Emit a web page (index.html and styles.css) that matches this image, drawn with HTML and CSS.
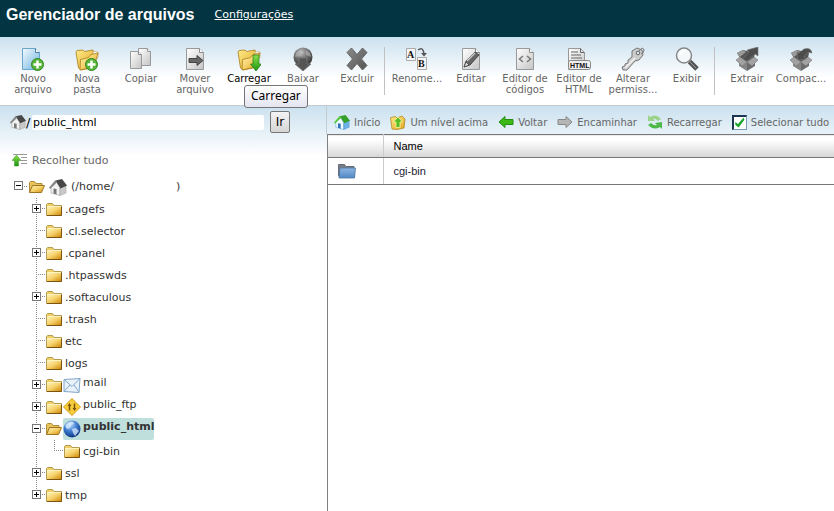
FILE: index.html
```html
<!DOCTYPE html>
<html lang="pt-BR">
<head>
<meta charset="utf-8">
<title>Gerenciador de arquivos</title>
<link rel="stylesheet" href="styles.css">
</head>
<body>
<svg class="sprite" aria-hidden="true">
  <defs>
    <linearGradient id="gold" x1="0" y1="0" x2="1" y2="1"><stop offset="0" stop-color="#fff3b8"/><stop offset=".5" stop-color="#f5d069"/><stop offset="1" stop-color="#d08a08"/></linearGradient>
    <linearGradient id="yellow" x1="0" y1="0" x2="1" y2="1"><stop offset="0" stop-color="#ffe98a"/><stop offset="1" stop-color="#e0a820"/></linearGradient>
    <linearGradient id="bluePage" x1="0" y1="0" x2="1" y2="1"><stop offset="0" stop-color="#f4fbff"/><stop offset="1" stop-color="#6fb3df"/></linearGradient>
    <linearGradient id="greyPage" x1="0" y1="0" x2="1" y2="1"><stop offset="0" stop-color="#fff"/><stop offset="1" stop-color="#c4c4c4"/></linearGradient>
    <linearGradient id="green" x1="0" y1="0" x2="0" y2="1"><stop offset="0" stop-color="#8be04a"/><stop offset="1" stop-color="#1c9410"/></linearGradient>
    <linearGradient id="steel" x1="0" y1="0" x2="1" y2="1"><stop offset="0" stop-color="#8a8a8a"/><stop offset="1" stop-color="#555"/></linearGradient>
    <linearGradient id="folderBlue" x1="0" y1="0" x2="0" y2="1"><stop offset="0" stop-color="#8db6e2"/><stop offset="1" stop-color="#5288c4"/></linearGradient>
    <radialGradient id="ball" cx=".4" cy=".25" r=".8"><stop offset="0" stop-color="#bbb"/><stop offset=".5" stop-color="#6a6a6a"/><stop offset="1" stop-color="#2e2e2e"/></radialGradient>
    <radialGradient id="earth" cx=".4" cy=".25" r=".8"><stop offset="0" stop-color="#b8dcff"/><stop offset=".5" stop-color="#3a78cc"/><stop offset="1" stop-color="#0a2c78"/></radialGradient>

    <symbol id="plus" viewBox="0 0 24 24"><circle cx="16.500" cy="17.500" r="6" fill="#59b53a" stroke="#2f861c"/><path d="M16.500 13.500v8M12.500 17.500h8" stroke="#fff" stroke-width="2.400"/></symbol>
    <symbol id="page" viewBox="0 0 24 24"><path d="M3.500 1.500h13l4 4v17h-17z" fill="url(#greyPage)" stroke="#999"/><path d="M16.500 1.500v4h4" fill="#fff" stroke="#888"/></symbol>
    <symbol id="open24" viewBox="0 0 24 24"><path d="M3.500 21L1 5l1-1.500 6-.5 1.500 1.500L18 3l1 4 1 13-14 3z" fill="url(#yellow)" stroke="#a87d16" stroke-width=".8"/><path d="M18 4.500l5 .5v6l-4 3z" fill="#fff" stroke="#b89b50" stroke-width=".6"/><path d="M5 23l.5-10.500 8-2 2.500-3 7-1.500-4 14z" fill="url(#gold)" stroke="#a87d16" stroke-width=".8"/></symbol>
    <symbol id="new-file" viewBox="0 0 24 24"><path d="M1.500 1.500h13l4 4v17h-17z" fill="url(#bluePage)" stroke="#6aa6cc"/><path d="M14.500 1.500v4h4" fill="#fff" stroke="#477fa8"/><use href="#plus"/></symbol>
    <symbol id="new-folder" viewBox="0 0 24 24"><use href="#open24"/><use href="#plus"/></symbol>
    <symbol id="copy" viewBox="0 0 24 24"><path d="M9.500 1.500h9l3 3v14h-12z" fill="url(#greyPage)" stroke="#999"/><path d="M18.500 1.500v3h3" fill="#fff" stroke="#999"/><path d="M1.500 4.500h8l3 3v14h-11z" fill="url(#greyPage)" stroke="#999"/><path d="M9.500 4.500v3h3" fill="#fff" stroke="#888"/></symbol>
    <symbol id="move" viewBox="0 0 24 24"><use href="#page"/><path d="M6 11.500h8v-3l6 5-6 5v-3H6z" fill="#666" stroke="#444"/></symbol>
    <symbol id="upload" viewBox="0 0 24 24"><use href="#open24"/><path d="M16 8h6v9h2.500L19 24l-5.500-7H16z" fill="url(#green)" stroke="#27801b" stroke-width=".7"/></symbol>
    <symbol id="download" viewBox="0 0 24 24"><circle cx="12" cy="10" r="9.500" fill="url(#ball)"/><path d="M5 6l4-3 4 2-3 4-6 1zM15 3l4 3 1 4-5-2z" fill="#bbb" opacity=".55"/><path d="M8 11h8v6h4l-8 7-8-7h4z" fill="#555" stroke="#777" stroke-width=".8"/></symbol>
    <symbol id="delete" viewBox="0 0 24 24"><path d="M2 5.500L6.500 1 12 7.500 17.500 1 22 5.500 16.500 12l5.500 6.500-4.500 4.500-5.500-6.500L6.500 23 2 18.500 7.500 12z" fill="url(#steel)" stroke="#666"/></symbol>
    <symbol id="rename" viewBox="0 0 24 24"><path d="M1.500 1.500h9v12h-9zM12.500 10.500h9v12h-9z" fill="#f5f5f5" stroke="#aaa"/><text x="2" y="11" class="glyph-serif">A</text><text x="13" y="20" class="glyph-serif">B</text><path d="M13 3q5-4 6 4" fill="none" stroke="#555" stroke-width="1.500"/><path d="M16 6h6l-3 3.500z" fill="#555"/></symbol>
    <symbol id="edit" viewBox="0 0 24 24"><use href="#page"/><path d="M5 20l2-6L16 5l4 3-9 10z" fill="#666" stroke="#333" stroke-width=".8"/><path d="M8 14l8-8" stroke="#ccc" stroke-width="1.500"/><path d="M5 20l2-5 3 3z" fill="#ddd" stroke="#333" stroke-width=".6"/></symbol>
    <symbol id="code" viewBox="0 0 24 24"><use href="#page"/><path d="M10 9l-3.500 3 3.500 3M14 9l3.500 3-3.500 3" fill="none" stroke="#777" stroke-width="1.500"/></symbol>
    <symbol id="html" viewBox="0 0 24 24"><path d="M1.500 1.500h12l4 4v17h-16z" fill="url(#greyPage)" stroke="#999"/><path d="M13.500 1.500v4h4M4 5h7M4 8h10M4 11h11" fill="none" stroke="#666"/><rect x="1.500" y="13.500" width="22" height="9" rx="2" fill="#eee" stroke="#888"/><text x="3" y="21" class="glyph-sans">HTML</text></symbol>
    <symbol id="key" viewBox="0 0 24 24"><path d="M11 4l5-3 5 2 1 5-4 5-4 1-8 9H2l-1-3 3-1v-2l3-1v-3l4-3z" fill="#ccc" stroke="#777"/><path d="M4 21l10-10" stroke="#f5f5f5" stroke-width="1.500"/><circle cx="17" cy="6" r="1.800" fill="#dcebf3" stroke="#666"/><path d="M18 4q4-5 5-1 0 3-3 4" fill="none" stroke="#777"/></symbol>
    <symbol id="view" viewBox="0 0 24 24"><path d="M14.500 14.500L22 22" stroke="#555" stroke-width="5"/><path d="M13 13l8 8" stroke="#999"/><circle cx="9" cy="8.500" r="7.500" fill="#f5f8fa" stroke="#888" stroke-width="1.500"/><path d="M5 8q1-4 5-4" fill="none" stroke="#fff" stroke-width="2"/></symbol>
    <symbol id="box" viewBox="0 0 24 24"><path d="M2 6l6-3 12 3-1 5-7 4-7-4z" fill="#555"/><path d="M2 6l6-3 3 2-6 5z" fill="#999"/><path d="M4 11l8 4v9l-8-5z" fill="#858585"/><path d="M20 11l-8 4v9l8-5z" fill="#6c6c6c"/><path d="M1 13l4-3 7 5-5 4zM23 13l-4-3-7 5 5 4z" fill="#a2a2a2" stroke="#777" stroke-width=".6"/></symbol>
    <symbol id="extract" viewBox="0 0 24 24"><use href="#box"/><path d="M8 12l6-7-2-2L23 0v9l-3-2-8 7z" fill="#4d4d4d" stroke="#777" stroke-width=".6"/></symbol>
    <symbol id="compress" viewBox="0 0 24 24"><use href="#box"/><path d="M23 6q-1-6-8-4l-5 4-2-1 1 8 8-1-2-2q3-6 8-4z" fill="#4d4d4d" stroke="#777" stroke-width=".6"/></symbol>

    <symbol id="home-grey" viewBox="0 0 18 18"><path d="M2 9l5-6 4 7v7.500L2 15z" fill="#f2f2f2" stroke="#aaa" stroke-width=".7"/><path d="M11 10l6-3v8l-6 2.500z" fill="#c9c9c9" stroke="#999" stroke-width=".5"/><path d="M6.500 2.500L13 1l5 6.500-6.500 3z" fill="#484848"/><path d="M0 9.500l6.500-7.500L8 4.500 1 11z" fill="#888"/><path d="M4.500 10.500l3 .5v5.500l-3-1z" fill="#777"/></symbol>
    <symbol id="home-color" viewBox="0 0 18 18"><path d="M2 9l5-6 4 7v7.500L2 15z" fill="#f0faff" stroke="#78b4e0" stroke-width=".7"/><path d="M11 10l6-3v8l-6 2.500z" fill="#6cb2ea" stroke="#3d86c5" stroke-width=".5"/><path d="M6.500 2.500L13 1l5 6.500-6.500 3z" fill="#35a02a"/><path d="M0 9.500l6.500-7.500L8 4.500 1 11z" fill="#58c840"/><path d="M4.500 10.500l3 .5v5.500l-3-1z" fill="#2970b8"/></symbol>
    <symbol id="folder" viewBox="0 0 16 16"><path d="M.5 14.500v-11l1-1h5l1.500 2h7.500v10z" fill="#f1cf67" stroke="#b59a52"/><path d="M1 6h14v8H1z" fill="url(#gold)"/><path d="M1 5.500h14" stroke="#fff3bd"/><path d="M1 14.500h14.500v-9" fill="none" stroke="#7b5510"/></symbol>
    <symbol id="folder-open" viewBox="0 0 16 16"><path d="M.5 13.500V3.500l1-1h4l1.500 2h6v3" fill="#e9c25a" stroke="#b08c38"/><path d="M.5 13.500l3-7h12l-3 7z" fill="url(#gold)" stroke="#9b7624"/></symbol>
    <symbol id="folder-blue" viewBox="0 0 18 16"><path d="M.5 13V1.500h6l1.500 2h8V14z" fill="#777d87" stroke="#666d78"/><path d="M2 5h15.500l-1 10H1z" fill="url(#folderBlue)" stroke="#4d76a5" stroke-width=".8"/></symbol>
    <symbol id="mail" viewBox="0 0 18 18"><path d="M1 3.500l16-1-1 14-15-1z" fill="#e9f2fa" stroke="#83a6c8"/><path d="M1 3.500l8 7 8-8M1 15.500l6-6.500M16 16l-5-7" fill="none" stroke="#83a6c8"/></symbol>
    <symbol id="ftp" viewBox="0 0 18 18"><path d="M9 .5L17.500 9 9 17.500.5 9z" fill="#f7cd3c" stroke="#d09b11"/><path d="M6.500 12.500V7M11.500 5.500V11" stroke="#7a5500" stroke-width="1.500"/><path d="M4.500 8l2-3 2 3zM9.500 10l2 3 2-3z" fill="#7a5500"/></symbol>
    <symbol id="globe" viewBox="0 0 18 18"><circle cx="9" cy="9" r="8.500" fill="url(#earth)"/><path d="M2 6q3-5 8-4l1 2-3 1-1 3-3 1zM9 9l4-1 3 3-4 5-2-3z" fill="#dbeeff" opacity=".75"/></symbol>
    <symbol id="collapse" viewBox="0 0 16 14"><path d="M7 1.500h8M9 4.500h6M9 7.500h6M9 10.500h6M1 1.500h6" stroke="#999"/><path d="M4.500 2L9 7.500H6.500V13h-4V7.500H0z" fill="url(#green)" stroke="#3a912b" stroke-width=".5"/></symbol>
    <symbol id="up" viewBox="0 0 16 16"><path d="M2 15L.5 3.500l5-1L7 4l5-2 3 3-1 9-7 1.500z" fill="url(#yellow)" stroke="#b38a22" stroke-width=".8"/><path d="M8 3l4.500 5H10v5.500H6V8H3.500z" fill="#55bd23" stroke="#fff7a0" stroke-width=".8"/></symbol>
    <symbol id="arrow" viewBox="0 0 16 14"><path d="M1 7l6-5.500v3h8v5H7v3z" fill="currentColor" stroke-width="1"/></symbol>
    <symbol id="reload" viewBox="0 0 16 16"><path d="M1 7V1l2 2q6-4 11 2l-3 2Q8 4 6 5l2 2z" fill="#9bd38b"/><path d="M15 8v7l-2-2q-6 4-12-2l3-2q3 3 6 2L8 9z" fill="#4cb84a"/></symbol>
  </defs>
</svg>

<header class="masthead">
  <h1>Gerenciador de arquivos</h1>
  <a href="#">Configurações</a>
</header>

<nav class="toolbar" aria-label="Ações">
  <button class="tool"><svg><use href="#new-file"/></svg><span>Novo<br>arquivo</span></button>
  <button class="tool"><svg><use href="#new-folder"/></svg><span>Nova<br>pasta</span></button>
  <button class="tool"><svg><use href="#copy"/></svg><span>Copiar</span></button>
  <button class="tool"><svg><use href="#move"/></svg><span>Mover<br>arquivo</span></button>
  <button class="tool tool-active"><svg><use href="#upload"/></svg><span>Carregar</span><span class="tooltip" role="tooltip">Carregar</span></button>
  <button class="tool"><svg><use href="#download"/></svg><span>Baixar</span></button>
  <button class="tool"><svg><use href="#delete"/></svg><span>Excluir</span></button>
  <i class="divider"></i>
  <button class="tool"><svg><use href="#rename"/></svg><span>Renome...</span></button>
  <button class="tool"><svg><use href="#edit"/></svg><span>Editar</span></button>
  <button class="tool"><svg><use href="#code"/></svg><span>Editor de<br>códigos</span></button>
  <button class="tool"><svg><use href="#html"/></svg><span>Editor de<br>HTML</span></button>
  <button class="tool"><svg><use href="#key"/></svg><span>Alterar<br>permiss...</span></button>
  <button class="tool"><svg><use href="#view"/></svg><span>Exibir</span></button>
  <i class="divider"></i>
  <button class="tool"><svg><use href="#extract"/></svg><span>Extrair</span></button>
  <button class="tool"><svg><use href="#compress"/></svg><span>Compac...</span></button>
</nav>

<main class="panes">
  <aside class="sidebar">
    <form class="path">
      <label for="path"><svg class="i16"><use href="#home-grey"/></svg>/</label>
      <input id="path" type="text" value="public_html">
      <button type="button">Ir</button>
    </form>
    <button class="collapse"><svg><use href="#collapse"/></svg>Recolher tudo</button>
    <div class="row root"><span class="twig"><b class="box minus"></b></span><svg class="i16"><use href="#folder-open"/></svg><svg class="i18"><use href="#home-grey"/></svg><span>(/home/</span><span class="blank"></span><span>)</span></div>
    <ul class="tree">
      <li><div class="row"><span class="twig"><b class="box plus"></b></span><svg class="i16"><use href="#folder"/></svg><span>.cagefs</span></div></li>
      <li><div class="row"><span class="twig"></span><svg class="i16"><use href="#folder"/></svg><span>.cl.selector</span></div></li>
      <li><div class="row"><span class="twig"><b class="box plus"></b></span><svg class="i16"><use href="#folder"/></svg><span>.cpanel</span></div></li>
      <li><div class="row"><span class="twig"></span><svg class="i16"><use href="#folder"/></svg><span>.htpasswds</span></div></li>
      <li><div class="row"><span class="twig"><b class="box plus"></b></span><svg class="i16"><use href="#folder"/></svg><span>.softaculous</span></div></li>
      <li><div class="row"><span class="twig"></span><svg class="i16"><use href="#folder"/></svg><span>.trash</span></div></li>
      <li><div class="row"><span class="twig"></span><svg class="i16"><use href="#folder"/></svg><span>etc</span></div></li>
      <li><div class="row"><span class="twig"></span><svg class="i16"><use href="#folder"/></svg><span>logs</span></div></li>
      <li><div class="row"><span class="twig"><b class="box plus"></b></span><svg class="i16"><use href="#folder"/></svg><span class="special"><svg class="i18"><use href="#mail"/></svg>mail</span></div></li>
      <li><div class="row"><span class="twig"><b class="box plus"></b></span><svg class="i16"><use href="#folder"/></svg><span class="special"><svg class="i18"><use href="#ftp"/></svg>public_ftp</span></div></li>
      <li><div class="row"><span class="twig"><b class="box minus"></b></span><svg class="i16"><use href="#folder-open"/></svg><span class="special selected"><svg class="i18"><use href="#globe"/></svg>public_html</span></div>
        <ul class="tree nested">
          <li><div class="row"><span class="twig"></span><svg class="i16"><use href="#folder"/></svg><span>cgi-bin</span></div></li>
        </ul>
      </li>
      <li><div class="row"><span class="twig"><b class="box plus"></b></span><svg class="i16"><use href="#folder"/></svg><span>ssl</span></div></li>
      <li><div class="row"><span class="twig"><b class="box plus"></b></span><svg class="i16"><use href="#folder"/></svg><span>tmp</span></div></li>
    </ul>
  </aside>

  <section class="content">
    <div class="actions">
      <button><svg class="i16"><use href="#home-color"/></svg>Início</button>
      <button><svg class="i16"><use href="#up"/></svg>Um nível acima</button>
      <button><svg class="i16 back"><use href="#arrow"/></svg>Voltar</button>
      <button><svg class="i16 forward"><use href="#arrow"/></svg>Encaminhar</button>
      <button><svg class="i16"><use href="#reload"/></svg>Recarregar</button>
      <label><input type="checkbox" checked>Selecionar tudo</label>
    </div>
    <div class="listing">
      <table>
        <thead><tr><th class="icon-col"></th><th>Name</th></tr></thead>
        <tbody><tr><td class="icon-col"><svg><use href="#folder-blue"/></svg></td><td>cgi-bin</td></tr></tbody>
      </table>
    </div>
  </section>
</main>
</body>
</html>
```
FILE: styles.css
```css
* { box-sizing: border-box; }

body {
  margin: 0;
  min-height: 100vh;
  display: flex;
  flex-direction: column;
  background: #fff;
  color: #333;
  font: 11px Verdana, "DejaVu Sans", sans-serif;
}

button {
  margin: 0;
  padding: 0;
  border: 0;
  background: none;
  color: inherit;
  font: inherit;
}

svg { display: block; flex: none; overflow: visible; }
.sprite { position: absolute; width: 0; height: 0; }
.i16 { width: 16px; height: 16px; }
.i18 { width: 18px; height: 18px; }
.glyph-serif { font: bold 10px "Liberation Serif", serif; fill: #111; }
.glyph-sans { font: bold 7px "Liberation Sans", sans-serif; fill: #111; }

.masthead {
  display: flex;
  align-items: center;
  gap: 20px;
  height: 37px;
  padding: 0 6px 8px;
  background: #023541;
  color: #fff;
}
.masthead h1 { margin: 0; font: bold 16px "Liberation Sans", sans-serif; }
.masthead a { color: #fff; }

.toolbar {
  display: flex;
  height: 69px;
  padding: 10px 6px 0;
  border-bottom: 1px solid #c4cbd0;
  background: linear-gradient(#cbe1ef, #fff 60%);
  color: #666;
  font-size: 10px;
  line-height: 11px;
}
.tool {
  position: relative;
  display: flex;
  flex-direction: column;
  align-items: center;
  gap: 2px;
  width: 54px;
  white-space: nowrap;
}
.tool svg { width: 24px; height: 24px; }
.tool-active { color: #000; }
.divider { width: 1px; height: 48px; margin-right: 5px; background: #c2c2c2; }
.tooltip {
  position: absolute;
  z-index: 1;
  top: 38px;
  left: 22px;
  padding: 1px 6px 2px;
  border: 1px solid #767676;
  border-radius: 3px;
  background: linear-gradient(#fff, #e4e5f0);
  color: #000;
  font: 12px/18px "Noto Sans", sans-serif;
}

.panes {
  flex: 1;
  display: flex;
  background: linear-gradient(#cbe1ef, #fff 50px);
}
.sidebar { flex: 0 0 326px; padding: 5px 10px 0; }

.path { display: flex; align-items: center; height: 22px; font-size: 11px; }
.path label { display: flex; align-items: center; width: 22px; font-size: 13px; color: #000; }
.path input {
  width: 232px;
  height: 15px;
  padding: 0 1px;
  border: 0;
  border-radius: 2px;
  background: #fff;
  color: #000;
  font: inherit;
}
.path button {
  width: 20px;
  height: 22px;
  margin-left: 6px;
  border: 1px solid #777;
  border-radius: 2px;
  background: linear-gradient(#f4f4f4, #d5d5d5);
  color: #000;
  font-size: 12px;
}

.collapse {
  display: flex;
  align-items: center;
  gap: 4px;
  height: 16px;
  margin: 19px 0 7px 2px;
  color: #666;
}
.collapse svg { width: 16px; height: 14px; }

.tree { margin: 0; padding: 0 0 0 18px; list-style: none; }
.tree li { background: repeating-linear-gradient(#888 0 1px, transparent 1px 2px) 8px 0 / 1px 100% no-repeat; }
.tree > li:last-child { background-size: 1px 10px; }
.row { display: flex; align-items: center; gap: 3px; height: 22px; }
.root { gap: 4px; height: 23px; }
.root .blank { width: 54px; }
.twig {
  display: flex;
  align-items: center;
  width: 18px;
  height: 22px;
  margin-right: -3px;
  padding: 0 0 2px 4px;
  background: repeating-linear-gradient(90deg, #888 0 1px, transparent 1px 2px) 8px 10px / 10px 1px no-repeat;
}
.box {
  width: 9px;
  height: 9px;
  border: 1px solid #777;
  background: linear-gradient(#000, #000) center / 5px 1px no-repeat, #fff;
}
.box.plus {
  background:
    linear-gradient(#000, #000) center / 5px 1px no-repeat,
    linear-gradient(#000, #000) center / 1px 5px no-repeat,
    #fff;
}
.special { display: flex; gap: 2px; height: 22px; margin-left: -2px; line-height: 17px; }
.special svg { margin-top: 2px; }
.selected { border-radius: 2px; background: #bfdfdd; font-weight: bold; }

.content { flex: 1; display: flex; flex-direction: column; min-width: 0; }
.actions {
  display: flex;
  align-items: center;
  gap: 10px;
  height: 28px;
  padding: 4px 0 0 7px;
  border-left: 1px solid #c0cbd2;
  color: #666;
  font-size: 10px;
  white-space: nowrap;
}
.actions button, .actions label { display: flex; align-items: center; gap: 4px; }
.back { color: #3cb817; stroke: #268c10; }
.forward { color: #b5b5b5; stroke: #888; transform: scaleX(-1); }
.actions input {
  appearance: none;
  width: 15px;
  height: 15px;
  margin: 0;
  border: 2px solid #1d3550;
  border-right: 1px solid #7a9cbb;
  border-bottom: 1px solid #7a9cbb;
  background: #fff;
}
.actions input:checked::before {
  content: "";
  display: block;
  height: 12px;
  background: #18a52c;
  clip-path: polygon(12% 45%, 35% 62%, 82% 8%, 88% 28%, 40% 92%, 12% 68%);
}

.listing { flex: 1; margin-left: 1px; border-left: 1px solid #808080; background: #fff; }
table { width: 100%; border-collapse: collapse; color: #223; font: 11px "Liberation Sans", sans-serif; }
th, td { padding: 0 10px; text-align: left; font-weight: normal; }
th { height: 23px; border: solid #777; border-width: 1px 0; background: linear-gradient(#fff 20%, #d6d6d6); color: #000; }
td { height: 27px; border-bottom: 1px solid #777; }
.icon-col { width: 55px; border-right: 1px solid #ccc; }
.icon-col svg { width: 18px; height: 16px; }
```
